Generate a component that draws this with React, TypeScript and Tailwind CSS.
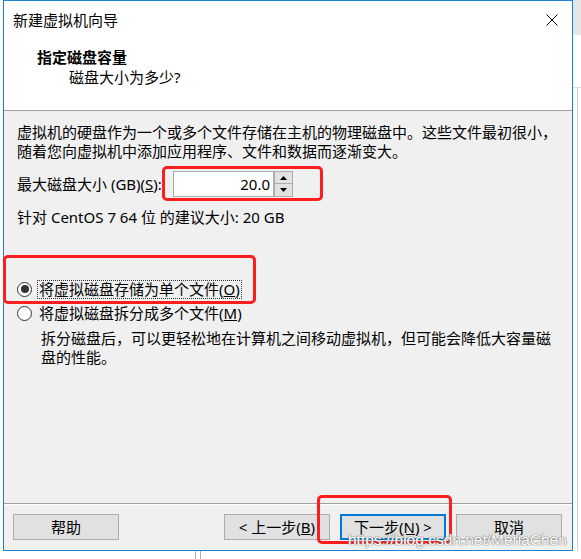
import React from "react";

const FONT = "[font-family:'Noto_Sans','Noto_Sans_CJK_SC',sans-serif]";

function Btn({ children, focused }: { children: React.ReactNode; focused?: boolean }) {
  return (
    <div
      className={
        "w-[106px] h-[26px] flex items-center justify-center bg-[#e1e1e1] text-[15px] leading-[19px] text-black " +
        (focused ? "border-2 border-[#0078d7]" : "border border-[#adadad]")
      }
    >
      {children}
    </div>
  );
}

function Radio({ checked }: { checked?: boolean }) {
  return (
    <div className="w-[15px] h-[15px] rounded-full border border-[#333333] bg-white flex items-center justify-center shrink-0">
      {checked && <div className="w-[8px] h-[8px] rounded-full bg-[#333333]" />}
    </div>
  );
}

export default function App() {
  return (
    <div className={"relative w-[581px] h-[559px] bg-white overflow-hidden text-black " + FONT}>
      <div className="flex">
        {/* window */}
        <div className="ml-[3px] w-[570px] h-[551px] border border-[#1883d7] flex flex-col bg-[#f0f0f0]">
          {/* white header */}
          <div className="h-[110px] bg-white border-b border-[#a0a0a0] flex flex-col">
            <div className="h-[38px] flex items-center justify-between pl-[9px] pr-[14px]">
              <span className="text-[15px] leading-[19px]">新建虚拟机向导</span>
              <svg width="12" height="12" viewBox="0 0 12 12" className="mt-[-1px]">
                <path d="M0.5 0.5 L11.5 11.5 M11.5 0.5 L0.5 11.5" stroke="#000" strokeWidth="1" fill="none" />
              </svg>
            </div>
            <div className="mt-[8px] pl-[33px] text-[15px] leading-[20px] font-bold">指定磁盘容量</div>
            <div className="pl-[65px] text-[15px] leading-[20px]">磁盘大小为多少?</div>
          </div>

          {/* body */}
          <div className="flex-1 flex flex-col pl-[13px] pt-[12px] text-[15px] leading-[19px]">
            <div>虚拟机的硬盘作为一个或多个文件存储在主机的物理磁盘中。这些文件最初很小，</div>
            <div>随着您向虚拟机中添加应用程序、文件和数据而逐渐变大。</div>

            <div className="mt-[10px] flex items-center h-[26px]">
              <div className="w-[156px] whitespace-nowrap">
                最大磁盘大小 (GB)(<span className="underline">S</span>):
              </div>
              <div className="w-[101px] h-[26px] border border-[#adadad] bg-white flex items-center justify-end pr-[3px]">
                20.0
              </div>
              <div className="w-[19px] h-[26px] flex flex-col">
                <div className="h-[13px] bg-[#e1e1e1] border border-[#adadad] flex items-center justify-center">
                  <svg width="7" height="4" viewBox="0 0 7 4">
                    <path d="M3.5 0 L7 4 L0 4 Z" fill="#000" />
                  </svg>
                </div>
                <div className="h-[13px] bg-[#e1e1e1] border border-t-0 border-[#adadad] flex items-center justify-center">
                  <svg width="7" height="4" viewBox="0 0 7 4">
                    <path d="M0 0 L7 0 L3.5 4 Z" fill="#000" />
                  </svg>
                </div>
              </div>
            </div>

            <div className="mt-[11px]">针对 CentOS 7 64 位 的建议大小: 20 GB</div>

            <div className="mt-[50px] h-[24px] flex items-center">
              <Radio checked />
              <div className="ml-[5px] px-[1px] border border-dotted border-[#333333] leading-[17px]">
                将虚拟磁盘存储为单个文件(<span className="underline">O</span>)
              </div>
            </div>
            <div className="h-[24px] flex items-center">
              <Radio />
              <div className="ml-[6px] px-[1px]">
                将虚拟磁盘拆分成多个文件(<span className="underline">M</span>)
              </div>
            </div>
            <div className="ml-[24px] mt-[4px]">拆分磁盘后，可以更轻松地在计算机之间移动虚拟机，但可能会降低大容量磁</div>
            <div className="ml-[24px]">盘的性能。</div>
          </div>

          {/* footer */}
          <div className="h-[47px] border-t border-[#a0a0a0] flex flex-col">
            <div className="h-[1px] bg-white" />
            <div className="flex items-center justify-between pl-[9px] pr-[10px] pt-[9px]">
              <Btn>帮助</Btn>
              <div className="flex gap-[10px]">
                <Btn>
                  &lt; 上一步(<span className="underline">B</span>)
                </Btn>
                <Btn focused>
                  下一步(<span className="underline">N</span>) &gt;
                </Btn>
                <Btn>取消</Btn>
              </div>
            </div>
          </div>
        </div>

        {/* right outside strip */}
        <div className="flex-1 flex flex-col">
          <div className="h-[35px] bg-[#e6e6e7]" />
          <div className="h-[52px]" />
          <div className="flex-1 border-t border-[#e0e0e0] flex">
            <div className="w-[4px]" />
            <div className="w-[1px] bg-[#d0d0d0]" />
          </div>
        </div>
      </div>

      {/* bottom outside strip */}
      <div className="flex h-[8px]">
        <div className="w-[195px]" />
        <div className="w-[1px] bg-[#b0b0b0]" />
        <div className="w-[4px]" />
        <div className="w-[1px] bg-[#b0b0b0]" />
      </div>

      {/* red annotation boxes */}
      <div className="absolute left-[162px] top-[166px] w-[161px] h-[35px] border-[3px] border-[#fa1e1e] rounded-[5px]" />
      <div className="absolute left-[3px] top-[255px] w-[253px] h-[49px] border-[3px] border-[#fa1e1e] rounded-[5px]" />
      <div className="absolute left-[317px] top-[495px] w-[135px] h-[49px] border-[3px] border-[#fa1e1e] rounded-[5px]" />

      {/* watermark */}
      <div className="absolute left-[348px] top-[530px] whitespace-nowrap text-[15.5px] leading-[20px] text-white [font-family:'Liberation_Sans',Arial,sans-serif] [text-shadow:0_0_1px_#7a7a7a,0_0_1px_#7a7a7a,0_0_1px_#7a7a7a]">
        https://blog.csdn.net/MeriaChen
      </div>
    </div>
  );
}
